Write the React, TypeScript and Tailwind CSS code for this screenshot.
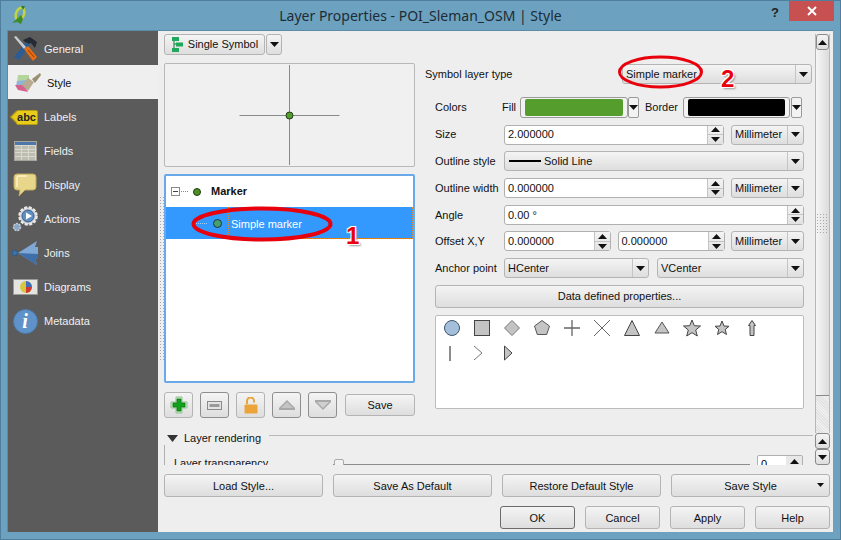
import React from "react";

const btn =
  "flex items-center justify-center border border-[#b4b4b4] rounded-[3px] bg-linear-to-b from-[#f4f4f4] to-[#dedede] text-[#111]";

const Caret = ({ className = "" }: { className?: string }) => (
  <svg width="9" height="5" viewBox="0 0 9 5" className={className}>
    <path d="M0 0h9L4.5 5z" fill="#111" />
  </svg>
);

const CaretUp = () => (
  <svg width="9" height="5" viewBox="0 0 9 5">
    <path d="M0 5h9L4.500 0z" fill="#111" />
  </svg>
);

const Combo = ({ w, children }: { w: string; children: React.ReactNode }) => (
  <div className={`${w} h-[20px] flex items-center shrink-0 ${btn} !justify-start`}>
    <span className="flex-1 flex items-center pl-[3px] min-w-0 whitespace-nowrap">{children}</span>
    <span className="w-[16px] h-full border-l border-[#c4c4c4] flex items-center justify-center">
      <Caret />
    </span>
  </div>
);

const SpinArrows = () => (
  <span className="w-[16px] h-full flex flex-col border-l border-[#c4c4c4] bg-linear-to-b from-[#f4f4f4] to-[#e2e2e2]">
    <span className="flex-1 flex items-center justify-center border-b border-[#c4c4c4]">
      <CaretUp />
    </span>
    <span className="flex-1 flex items-center justify-center">
      <Caret />
    </span>
  </span>
);

const Spin = ({ w, value }: { w: string; value: string }) => (
  <div className={`${w} h-[20px] flex items-center shrink-0 bg-white border border-[#b0b0b0] rounded-[3px]`}>
    <span className="flex-1 pl-[3px] text-[#111]">{value}</span>
    <SpinArrows />
  </div>
);

const Row = ({ label, children }: { label: string; children: React.ReactNode }) => (
  <div className="flex items-center h-[20px]">
    <span className="w-[69px] shrink-0 text-[#111] whitespace-nowrap">{label}</span>
    <div className="flex-1 flex items-center justify-between">{children}</div>
  </div>
);

const QgisLogo = () => (
  <svg width="16" height="20" viewBox="0 0 16 20">
    <ellipse cx="9" cy="9" rx="4" ry="6.500" fill="none" stroke="#c3d43c" strokeWidth="2.600" transform="rotate(20 9 9)" />
    <path d="M1 18 L8 12 L10 10 L12 14 L10 19 L6 17z" fill="#3f8a2a" />
    <path d="M10 1l4 0-2 4z" fill="#2f7a2a" />
  </svg>
);

const GeneralIcon = () => (
  <svg width="25" height="26" viewBox="0 0 25 26">
    <path d="M10 4 L17 1 L24 6 L22 12 L18 7 L15 8 L13 7z" fill="#232a33" />
    <path d="M13 6 L17 9 L6 24 L1 21z" fill="#2c5c96" />
    <path d="M1 1 L3 0 L13 11 L11 13z" fill="#c8ccd0" />
    <path d="M11 13 L15 10 L24 21 L20 25z" fill="#e96c10" />
    <path d="M15 14 L21 21" stroke="#8a3c06" strokeWidth="1" />
  </svg>
);

const StyleIcon = () => (
  <svg width="26" height="20" viewBox="0 0 26 20">
    <path d="M3 2 L14 2 L14 8 L2 9z" fill="#b4d69c" />
    <path d="M2 8 L12 7 L9 13 L1 13z" fill="#8fb4d8" />
    <path d="M0 12 L9 12 L13 19 L3 17z" fill="#d4618e" />
    <path d="M13 5 L19 9 L13 18 L7 12z" fill="#b8ab90" />
    <path d="M17 6 L25 0 L26 2 L20 10z" fill="#9a8e72" />
  </svg>
);

const LabelsIcon = () => (
  <div className="relative ml-[3px] w-[22px] h-[15px] bg-[#e8cc1c] rounded-[2px] border border-[#b79c10] flex items-center justify-center">
    <span className="absolute left-[-5px] top-[2px] w-[8px] h-[8px] rotate-45 bg-[#e8cc1c] border-l border-b border-[#b79c10]" />
    <span className="relative text-[11px] font-bold leading-none text-[#222]">abc</span>
  </div>
);

const FieldsIcon = () => (
  <div className="w-[23px] h-[20px] flex flex-col border border-[#a5a59c] bg-[#d9d9cf]">
    <div className="h-[3px] bg-[#4f78a8]" />
    {[0, 1, 2, 3].map((i) => (
      <div key={i} className="mt-[1px] h-[3px] flex gap-[1px]">
        <span className="flex-1 bg-[#bdbdb2]" />
        <span className="flex-1 bg-[#bdbdb2]" />
        <span className="flex-1 bg-[#bdbdb2]" />
      </div>
    ))}
  </div>
);

const DisplayIcon = () => (
  <svg width="24" height="24" viewBox="0 0 24 24">
    <path d="M4 1h16a3 3 0 0 1 3 3v10a3 3 0 0 1-3 3H12l-6 6 1-6H4a3 3 0 0 1-3-3V4a3 3 0 0 1 3-3z" fill="#e8d78a" stroke="#bfa95a" />
    <path d="M4 14V5a2 2 0 0 1 2-2h8" fill="none" stroke="#fbf3c8" strokeWidth="1.500" />
  </svg>
);

const ActionsIcon = () => (
  <svg width="26" height="26" viewBox="0 0 26 26">
    <circle cx="16" cy="10" r="8.500" fill="#cfd3d6" stroke="#e8e8e8" strokeWidth="2.500" strokeDasharray="3 1.500" />
    <circle cx="16" cy="10" r="6" fill="#5f8fc4" stroke="#3b5f88" />
    <path d="M14 6.500 L20 10 L14 13.500z" fill="#fff" />
    <circle cx="5" cy="21" r="3.500" fill="#8aa6c6" stroke="#c8ced4" strokeWidth="1.500" strokeDasharray="2 1" />
  </svg>
);

const JoinsIcon = () => (
  <svg width="27" height="24" viewBox="0 0 27 24">
    <circle cx="2.800" cy="12" r="2.800" fill="#3b73a8" stroke="#24507a" strokeWidth="0.600" />
    <path d="M6 12 L25 0 L23 6 L26 6 V18 L23 18 L25 24z" fill="#7fa8d6" />
    <path d="M6 12 L26 13 V18 L23 18 L25 24z" fill="#3f6fa8" />
  </svg>
);

const DiagramsIcon = () => (
  <div className="relative w-[25px] h-[16px] bg-[#e4e4e0] border border-[#9a9a96]">
    <svg width="14" height="14" viewBox="0 0 14 14" className="absolute left-[5px] top-[0px]">
      <circle cx="7" cy="7" r="6" fill="#d9c640" />
      <path d="M7 7V1a6 6 0 0 1 6 6z" fill="#3f6fb8" />
      <path d="M7 7h6a6 6 0 0 1-6 6z" fill="#cf3a30" />
    </svg>
  </div>
);

const MetadataIcon = () => (
  <div className="w-[25px] h-[25px] rounded-full bg-[#5f92c9] border border-[#4a7aae] flex items-center justify-center">
    <span className="text-white font-bold italic text-[20px] leading-none font-['Liberation_Serif',serif]">i</span>
  </div>
);

const navItems: { label: string; icon: React.ReactNode; active?: boolean }[] = [
  { label: "General", icon: <GeneralIcon /> },
  { label: "Style", icon: <StyleIcon />, active: true },
  { label: "Labels", icon: <LabelsIcon /> },
  { label: "Fields", icon: <FieldsIcon /> },
  { label: "Display", icon: <DisplayIcon /> },
  { label: "Actions", icon: <ActionsIcon /> },
  { label: "Joins", icon: <JoinsIcon /> },
  { label: "Diagrams", icon: <DiagramsIcon /> },
  { label: "Metadata", icon: <MetadataIcon /> },
];

const ToolBtn = ({ children, dark }: { children: React.ReactNode; dark?: boolean }) => (
  <div className={`w-[29px] h-[26px] ${btn} ${dark ? "!border-[#8e8e8e]" : ""}`}>{children}</div>
);

const shapeProps = { fill: "#c4c4c4", stroke: "#444", strokeWidth: 1 };

const symbols: { shape: React.ReactNode; w: string }[] = [
  { shape: <circle cx="10" cy="10" r="7.500" fill="#a3bfdc" stroke="#44546a" />, w: "w-[30px]" },
  { shape: <rect x="2.500" y="2.500" width="15" height="15" {...shapeProps} />, w: "w-[30px]" },
  { shape: <path d="M10 2.500 L17.500 10 L10 17.500 L2.500 10z" fill="#c4c4c4" stroke="#777" />, w: "w-[30px]" },
  { shape: <path d="M10 2.500 L17.500 8 L14.700 16.500 H5.300 L2.500 8z" {...shapeProps} stroke="#555" />, w: "w-[30px]" },
  { shape: <path d="M2 10H18M10 2V18" stroke="#666" strokeWidth="1.300" fill="none" />, w: "w-[30px]" },
  { shape: <path d="M2 2L18 18M18 2L2 18" stroke="#666" fill="none" />, w: "w-[30px]" },
  { shape: <path d="M10 2.500 L17.500 17.500 H2.500z" {...shapeProps} />, w: "w-[30px]" },
  { shape: <path d="M10 4 L17 15 H3z" {...shapeProps} stroke="#555" />, w: "w-[30px]" },
  { shape: <path d="M10 2 L12.300 7.700 L18.500 8 L13.700 12 L15.300 18 L10 14.700 L4.700 18 L6.300 12 L1.500 8 L7.700 7.700z" {...shapeProps} />, w: "w-[30px]" },
  { shape: <path d="M10 3 L12 8 L17 8.300 L13.200 11.500 L14.500 16.500 L10 13.700 L5.500 16.500 L6.800 11.500 L3 8.300 L8 8z" {...shapeProps} />, w: "w-[30px]" },
  { shape: <path d="M10 2.500 L13.500 7.500 H12 V17.500 H8 V7.500 H6.500z" {...shapeProps} />, w: "w-[30px]" },
  { shape: <path d="M10 3V18" stroke="#666" strokeWidth="1.500" fill="none" />, w: "w-[26px]" },
  { shape: <path d="M6 3L14 10L6 17" stroke="#777" fill="none" />, w: "w-[30px]" },
  { shape: <path d="M6.500 3L14 10L6.500 17z" {...shapeProps} />, w: "w-[30px]" },
];

const Grip = ({ className }: { className: string }) => (
  <div
    className={`absolute ${className} bg-[radial-gradient(#a8a8a8_1px,transparent_1px)] bg-[length:3px_3px]`}
  />
);

const Badge = ({ children, className }: { children: string; className: string }) => (
  <span
    className={`absolute ${className} text-[24px] leading-none font-bold text-[#e8000c] [text-shadow:1px_1px_0_#fff,-1px_-1px_0_#fff,1px_-1px_0_#fff,-1px_1px_0_#fff,2px_2px_2px_#999]`}
  >
    {children}
  </span>
);

export default function App() {
  return (
    <div className="relative w-[841px] h-[540px] overflow-hidden flex flex-col bg-[#6ca1bf] border border-[#4f7f9c] font-['Liberation_Sans',sans-serif] text-[11px]">
      {/* title bar */}
      <div className="relative h-[29px] shrink-0 flex items-center justify-center">
        <span className="absolute left-[10px] top-[4px]">
          <QgisLogo />
        </span>
        <span className="text-[14px] text-[#1e2c36] font-['Noto_Sans',sans-serif] pb-[1px]">Layer Properties - POI_Sleman_OSM | Style</span>
        <span className="absolute left-[770px] top-[2px] text-[13px] font-bold text-[#222]">?</span>
        <span className="absolute left-[788px] top-[-1px] w-[45px] h-[21px] bg-[#c75050] flex items-center justify-center text-white">
          <svg width="10" height="10" viewBox="0 0 10 10">
            <path d="M1 1L9 9M9 1L1 9" stroke="#fff" strokeWidth="2" />
          </svg>
        </span>
      </div>

      <div className="ml-[6px] w-[825px] h-[501px] flex border border-[#5d8aa6] border-r-0 border-b-0 box-content">
        {/* sidebar */}
        <nav className="w-[150px] shrink-0 bg-[#5b5b5b] flex flex-col">
          {navItems.map((item) => (
            <div
              key={item.label}
              className={`h-[34px] flex items-center pl-[1px] pt-[2px] ${
                item.active ? "bg-[#efefef] text-[#111]" : "text-[#f0f0f0]"
              }`}
            >
              <span className={`w-[32px] flex justify-center shrink-0 mr-[3px] ${item.active ? "pl-[6px]" : ""}`}>{item.icon}</span>
              <span className={item.active ? "ml-[3px]" : ""}>{item.label}</span>
            </div>
          ))}
        </nav>

        {/* main */}
        <main className="relative flex-1 bg-[#eeeeee] flex flex-col pl-[6px] pr-[3px] pt-[3px]">
          <Grip className="left-[1px] top-[165px] w-[6px] h-[165px]" />
          <div className="flex h-[431px] shrink-0">
            <div className="w-[649px] flex flex-col">
              <div className="flex h-[396px] shrink-0">
                {/* left column */}
                <div className="w-[251px] shrink-0 flex flex-col">
                  <div className="flex h-[21px]">
                    <div className={`w-[101px] ${btn} gap-[5px]`}>
                      <svg width="12" height="15" viewBox="0 0 12 15">
                        <path d="M3 3v9h3M3 7h3" stroke="#157a40" fill="none" />
                        <rect x="1" y="0" width="7" height="4" fill="#1fa85a" />
                        <rect x="5" y="5.500" width="7" height="4" fill="#1fa85a" />
                        <rect x="1" y="11" width="7" height="4" fill="#1fa85a" />
                      </svg>
                      Single Symbol
                    </div>
                    <div className={`w-[16px] ml-px ${btn}`}>
                      <Caret />
                    </div>
                  </div>

                  <div className="relative mt-[8px] h-[104px] border border-[#b8b8b8] rounded-[2px] bg-[#f0f0f0]">
                    <svg width="248" height="102" viewBox="0 0 248 102">
                      <path d="M74.500 51.500H174.500M124.500 1V101" stroke="#8a8a8a" />
                      <circle cx="124.500" cy="51.500" r="3.500" fill="#559e2e" stroke="#1d3a10" />
                    </svg>
                  </div>

                  <div className="mt-[7px] h-[209px] border-2 border-[#69a9ea] rounded-[2px] bg-white flex flex-col">
                    <div className="h-[31px] flex items-center pl-[5px] shrink-0">
                      <span className="w-[9px] h-[9px] border border-[#8a8a8a] flex items-center justify-center">
                        <span className="w-[5px] h-px bg-[#444]" />
                      </span>
                      <span className="w-[7px] ml-[1px] border-t border-dotted border-[#888]" />
                      <span className="ml-[5px] w-[8px] h-[8px] rounded-full bg-[#4d8f27] border border-[#1e3d10]" />
                      <span className="ml-[10px] font-bold text-[#111]">Marker</span>
                    </div>
                    <div className="h-[32px] flex items-center bg-[#3399ff] shrink-0">
                      <span className="ml-[30px] w-[11px] border-t border-dotted border-[#a8d0f4]" />
                      <span className="ml-[6px] w-[9px] h-[9px] rounded-full bg-[#46a06a] border border-[#123a44]" />
                      <span className="ml-[6px] h-full flex-1 flex items-center pl-[2px] pt-[3px] text-white border-l border-b border-r border-dotted border-[#e88a20]">
                        Simple marker
                      </span>
                    </div>
                  </div>

                  <div className="mt-[9px] flex items-center">
                    <div className="flex gap-[7px]">
                      <ToolBtn>
                        <svg width="18" height="18" viewBox="0 0 18 18">
                          <path d="M6 1h6v5h5v6h-5v5H6v-5H1V6h5z" fill="#c9e6c9" stroke="#8fc48f" />
                          <path d="M7 3h4v4h4v4h-4v4H7v-4H3V7h4z" fill="#12a31c" stroke="#0a6a12" strokeWidth="0.700" />
                        </svg>
                      </ToolBtn>
                      <ToolBtn dark>
                        <svg width="15" height="9" viewBox="0 0 15 9">
                          <rect x="0.500" y="0.500" width="14" height="8" fill="#e4e4e4" stroke="#8a8a8a" />
                          <rect x="2.500" y="3" width="10" height="3" fill="#9a9a9a" />
                        </svg>
                      </ToolBtn>
                      <ToolBtn>
                        <svg width="14" height="17" viewBox="0 0 14 17">
                          <path d="M3 7V4a3.500 3.500 0 0 1 7 0v1.500" fill="none" stroke="#e8a33a" strokeWidth="2" />
                          <rect x="0.500" y="7.500" width="13" height="9" rx="1" fill="#eba43a" />
                        </svg>
                      </ToolBtn>
                      <ToolBtn dark>
                        <svg width="16" height="10" viewBox="0 0 16 10">
                          <path d="M8 0L16 8V10H0V8z" fill="#a8a8a8" />
                          <path d="M8 2L14 8H2z" fill="#c4c4c4" />
                        </svg>
                      </ToolBtn>
                      <ToolBtn dark>
                        <svg width="16" height="10" viewBox="0 0 16 10">
                          <path d="M0 0H16V2L8 10L0 2z" fill="#a8a8a8" />
                          <path d="M2 2H14L8 8z" fill="#cfcfcf" />
                        </svg>
                      </ToolBtn>
                    </div>
                    <div className={`ml-[8px] w-[70px] h-[22px] ${btn}`}>Save</div>
                  </div>
                </div>

                {/* right column */}
                <div className="ml-[10px] flex-1 flex flex-col pt-[30px]">
                  <div className="flex items-center h-[20px] pr-[1px]">
                    <span className="flex-1 text-[#111]">Symbol layer type</span>
                    <Combo w="w-[190px]">Simple marker</Combo>
                  </div>
                  <div className="ml-[10px] w-[369px] mt-[13px] flex flex-col gap-[6.7px]">
                    <div className="flex items-center h-[21px] text-[#111]">
                      <span className="w-[67px] shrink-0">Colors</span>
                      <span className="w-[18px] shrink-0">Fill</span>
                      <div className="w-[108px] h-[21px] px-[4px] py-[1px] border border-[#9a9a9a] rounded-[3px] bg-[#f2f2f2] flex">
                        <span className="flex-1 rounded-[2px] bg-[#559e2e]" />
                      </div>
                      <div className="w-[11px] h-[21px] border border-[#9a9a9a] rounded-[2px] bg-[#f2f2f2] flex items-center justify-center">
                        <Caret />
                      </div>
                      <span className="ml-[6px] w-[38px] shrink-0">Border</span>
                      <div className="w-[107px] h-[21px] px-[4px] py-[1px] border border-[#9a9a9a] rounded-[3px] bg-[#f2f2f2] flex">
                        <span className="flex-1 rounded-[2px] bg-black" />
                      </div>
                      <div className="ml-[1px] w-[11px] h-[21px] border border-[#9a9a9a] rounded-[2px] bg-[#f2f2f2] flex items-center justify-center">
                        <Caret />
                      </div>
                    </div>
                    <Row label="Size">
                      <Spin w="w-[220px]" value="2.000000" />
                      <Combo w="w-[73px]">Millimeter</Combo>
                    </Row>
                    <Row label="Outline style">
                      <Combo w="w-[300px]">
                        <span className="w-[32px] h-[2px] bg-black ml-[1px] mr-[3px]" />
                        Solid Line
                      </Combo>
                    </Row>
                    <Row label="Outline width">
                      <Spin w="w-[220px]" value="0.000000" />
                      <Combo w="w-[73px]">Millimeter</Combo>
                    </Row>
                    <Row label="Angle">
                      <Spin w="w-[300px]" value="0.00 °" />
                    </Row>
                    <Row label="Offset X,Y">
                      <Spin w="w-[107px]" value="0.000000" />
                      <Spin w="w-[107px]" value="0.000000" />
                      <Combo w="w-[73px]">Millimeter</Combo>
                    </Row>
                    <Row label="Anchor point">
                      <Combo w="w-[145px]">HCenter</Combo>
                      <Combo w="w-[147px]">VCenter</Combo>
                    </Row>
                    <div className={`h-[23px] ${btn}`}>Data defined properties...</div>
                    <div className="h-[94px] border border-[#bcbcbc] rounded-[2px] bg-white flex flex-wrap content-start pl-[1px] pr-[30px]">
                      {symbols.map((s, i) => (
                        <span key={i} className={`${s.w} h-[25px] flex items-center justify-center`}>
                          <svg width="20" height="20" viewBox="0 0 20 20">
                            {s.shape}
                          </svg>
                        </span>
                      ))}
                    </div>
                  </div>
                </div>
              </div>

              {/* layer rendering group, clipped by the scroll area */}
              <div className="relative mt-[1px] h-[34px] overflow-hidden">
                <div className="flex items-center h-[14px]">
                  <svg width="11" height="7" viewBox="0 0 11 7" className="ml-[3px]">
                    <path d="M0 0h11L5.500 7z" fill="#333" />
                  </svg>
                  <span className="ml-[6px] text-[#111]">Layer rendering</span>
                  <span className="ml-[8px] flex-1 h-px bg-[#b8b8b8] mb-[6px]" />
                </div>
                <div className="absolute left-0 top-[14px] bottom-0 w-px bg-[#b0b0b0]" />
                <div className="flex items-center pl-[10px] pt-[7px]">
                  <span className="w-[159px] text-[#111]">Layer transparency</span>
                  <span className="relative w-[417px] h-[3px] border border-[#8c8c8c] bg-[#e4e4e4] mt-[3px]">
                    <span className="absolute left-0 top-[-6px] w-[10px] h-[14px] border border-[#aaa] rounded-[2px] bg-[#f2f2f2]" />
                  </span>
                  <span className="ml-[7px] w-[46px] h-[20px] flex bg-white border border-[#b0b0b0] rounded-[2px] mt-[3px]">
                    <span className="flex-1 pl-[3px]">0</span>
                    <span className="w-[16px] bg-[#e8e8e8] flex justify-center pt-[3px] h-[10px]">
                      <CaretUp />
                    </span>
                  </span>
                </div>
              </div>
            </div>

            {/* scrollbar column */}
            <div className="relative ml-[2px] w-[15px] flex flex-col">
              <Grip className="left-[1px] top-[179px] w-[13px] h-[20px] z-10" />
              <div className="h-[399px] flex flex-col border-x border-[#b8b8b8] bg-[repeating-linear-gradient(45deg,#e2e2e2_0_1px,#f0f0f0_1px_2px)]">
                <div className={`h-[16px] ${btn} !border-[#8a8a8a]`}>
                  <CaretUp />
                </div>
                <div className="h-[346px] bg-linear-to-r from-[#f6f6f6] to-[#dcdcdc] border-b border-[#8a8a8a]" />
              </div>
              <div className={`h-[16px] ${btn} !border-[#8a8a8a]`}>
                <CaretUp />
              </div>
              <div className={`h-[16px] ${btn} !border-[#8a8a8a]`}>
                <Caret />
              </div>
            </div>
          </div>

          {/* style buttons */}
          <div className="mt-[9px] flex gap-[10px] h-[23px]">
            <div className={`w-[159px] pt-[2px] ${btn}`}>Load Style...</div>
            <div className={`w-[159px] pt-[2px] ${btn}`}>Save As Default</div>
            <div className={`w-[159px] pt-[2px] ${btn}`}>Restore Default Style</div>
            <div className={`relative w-[159px] pt-[2px] ${btn}`}>
              Save Style
              <svg width="7" height="4" viewBox="0 0 7 4" className="absolute right-[5px] top-[8px]">
                <path d="M0 0h7L3.500 4z" fill="#111" />
              </svg>
            </div>
          </div>

          {/* dialog buttons */}
          <div className="mt-[9px] flex justify-end gap-[10px] h-[23px]">
            <div className={`w-[75px] pt-[2px] ${btn} !border-[#6b6b6b]`}>OK</div>
            <div className={`w-[75px] pt-[2px] ${btn}`}>Cancel</div>
            <div className={`w-[75px] pt-[2px] ${btn}`}>Apply</div>
            <div className={`w-[75px] pt-[2px] ${btn}`}>Help</div>
          </div>

          {/* red annotations drawn over the dialog */}
          <svg width="675" height="300" className="absolute left-0 top-0 pointer-events-none">
            <ellipse cx="104" cy="193" rx="68.500" ry="15.500" fill="none" stroke="#e8000c" strokeWidth="4" />
            <ellipse cx="502.500" cy="41" rx="41" ry="15" fill="none" stroke="#e8000c" strokeWidth="3" />
          </svg>
          <Badge className="left-[188px] top-[193px]">1</Badge>
          <Badge className="left-[563px] top-[36px]">2</Badge>
        </main>
      </div>
    </div>
  );
}
